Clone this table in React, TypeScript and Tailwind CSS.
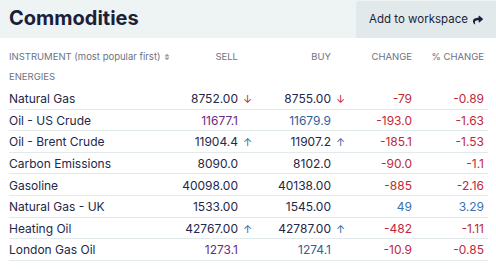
import React from 'react';
import { FaShare, FaSort } from 'react-icons/fa';

type Row = {
  name: string;
  sell: string;
  sellArrow?: 'up' | 'down';
  sellColor?: string;
  buy: string;
  buyArrow?: 'up' | 'down';
  buyColor?: string;
  change: string;
  pct: string;
  positive?: boolean;
};

const rows: Row[] = [
  { name: 'Natural Gas', sell: '8752.00', sellArrow: 'down', buy: '8755.00', buyArrow: 'down', change: '-79', pct: '-0.89' },
  { name: 'Oil - US Crude', sell: '11677.1', sellColor: 'text-[#6a2a82]', buy: '11679.9', buyColor: 'text-[#2f5f9a]', change: '-193.0', pct: '-1.63' },
  { name: 'Oil - Brent Crude', sell: '11904.4', sellArrow: 'up', buy: '11907.2', buyArrow: 'up', change: '-185.1', pct: '-1.53' },
  { name: 'Carbon Emissions', sell: '8090.0', buy: '8102.0', change: '-90.0', pct: '-1.1' },
  { name: 'Gasoline', sell: '40098.00', buy: '40138.00', change: '-885', pct: '-2.16' },
  { name: 'Natural Gas - UK', sell: '1533.00', buy: '1545.00', change: '49', pct: '3.29', positive: true },
  { name: 'Heating Oil', sell: '42767.00', sellArrow: 'up', buy: '42787.00', buyArrow: 'up', change: '-482', pct: '-1.11' },
  { name: 'London Gas Oil', sell: '1273.1', sellColor: 'text-[#6a2a82]', buy: '1274.1', buyColor: 'text-[#2f5f9a]', change: '-10.9', pct: '-0.85' },
];

const Arrow = ({ dir }: { dir?: 'up' | 'down' }) => {
  if (!dir) return <span className="w-[12px]" />;
  return (
    <span className={`w-[12px] pl-[5px] text-[11px] ${dir === 'up' ? 'text-[#2f6aa6]' : 'text-[#c0283a]'}`}>
      {dir === 'up' ? '↑' : '↓'}
    </span>
  );
};

export default function App() {
  return (
    <div className="w-[496px] h-[269px] bg-white overflow-hidden text-[#23274a]" style={{ fontFamily: 'Inter, "Noto Sans", sans-serif' }}>
      {/* Title band */}
      <div className="flex h-[38px] bg-[#eef3f4]">
        <h1 className="flex-1 pl-[9px] pt-[3px] text-[20px] font-bold leading-[30px] text-[#1b1f3b]">Commodities</h1>
        <button className="mt-[1px] w-[140px] flex items-center justify-center gap-[5px] bg-[#e2e9eb] rounded-tl-[3px] text-[11.5px] text-[#1b1f3b]">
          <span>Add to workspace</span>
          <FaShare className="w-[10px] h-[10px]" />
        </button>
      </div>

      <div className="mx-[9px] w-[479px]">
        {/* Column headings */}
        <div className="flex items-center h-[20px] mt-[9px] text-[9.5px] text-[#6c7284] whitespace-nowrap">
          <div className="flex-1 min-w-0 flex items-center gap-[3px]">
            <span>INSTRUMENT (most popular first)</span>
            <FaSort className="w-[8px] h-[8px] shrink-0 text-[#9aa0ab]" />
          </div>
          <div className="w-[40px] text-right">SELL</div>
          <div className="w-[12px]" />
          <div className="w-[81px] text-right">BUY</div>
          <div className="w-[12px]" />
          <div className="w-[69px] text-right">CHANGE</div>
          <div className="w-[72px] text-right">% CHANGE</div>
          <div className="w-[4px]" />
        </div>
        <div className="h-[20px] flex items-center text-[9.5px] text-[#6c7284]">ENERGIES</div>

        {/* Rows */}
        <div className="mt-[1px]">
          {rows.map((r) => {
            const chg = r.positive ? 'text-[#3a72b0]' : 'text-[#c0283a]';
            return (
              <div key={r.name} className="flex items-center h-[21.6px] pt-[2px] border-b border-[#e3eaec] text-[12px]">
                <div className="flex-1">{r.name}</div>
                <div className={`w-[80px] text-right ${r.sellColor ?? ''}`}>{r.sell}</div>
                <Arrow dir={r.sellArrow} />
                <div className={`w-[81px] text-right ${r.buyColor ?? ''}`}>{r.buy}</div>
                <Arrow dir={r.buyArrow} />
                <div className={`w-[69px] text-right ${chg}`}>{r.change}</div>
                <div className={`w-[72px] text-right ${chg}`}>{r.pct}</div>
                <div className="w-[4px]" />
              </div>
            );
          })}
        </div>
      </div>
    </div>
  );
}
